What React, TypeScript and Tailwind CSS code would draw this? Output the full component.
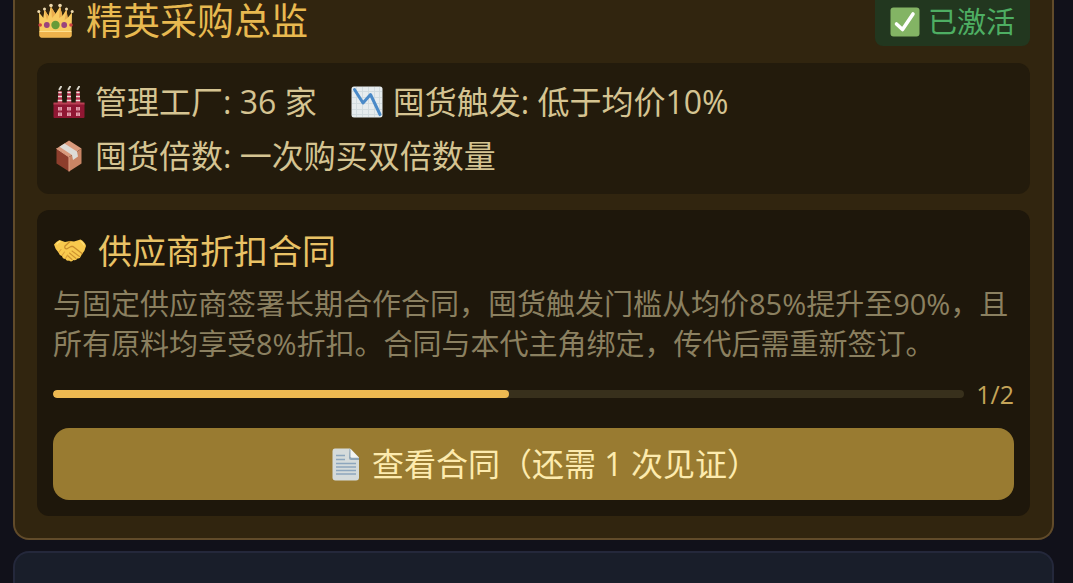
import type { ReactNode } from "react"

interface IconProps {
  className?: string
}

interface Stat {
  icon: ReactNode
  label: string
  value: string
}

function CrownIcon({ className }: IconProps) {
  return (
    <svg viewBox="0 0 37 37" className={className} aria-hidden="true">
      <path d="M7.5 6 L12 14 L13.5 4 L18.5 11 L23.5 4 L25 14 L29.5 6 L31 18 L6 18 Z" fill="#e3a044" />
      <path
        d="M2 9.5 L6.5 15 L7.5 7 L11.5 13 L14 3.5 L18.5 11 L23 3.5 L25.5 13 L29.5 7 L30.5 15 L35 9.5 L34.5 32.5 Q34.5 34.5 32.5 34.5 L4.5 34.5 Q2.5 34.5 2.5 32.5 Z"
        fill="#f8cb62"
      />
      <path d="M7.5 7.5 L11.5 13 L10 17 Z M23 4 L25.5 13 L22 15 Z M14 4 L18.5 11 L15 15 Z M29.5 7.5 L30.5 15 L27.5 17 Z" fill="#e9ab4c" />
      <path d="M2.5 29 H34.5 V32.5 Q34.5 34.5 32.5 34.5 H4.5 Q2.5 34.5 2.5 32.5 Z" fill="#eeb24b" />
      <path d="M2.5 28.5 H34.5" stroke="#ffdf8c" strokeWidth="1.2" />
      <g fill="#ecd9ae">
        <circle cx="1.8" cy="8.5" r="1.5" />
        <circle cx="7.5" cy="6" r="1.5" />
        <circle cx="14" cy="2.5" r="1.8" />
        <circle cx="23" cy="2.5" r="1.8" />
        <circle cx="29.5" cy="6" r="1.5" />
        <circle cx="35.2" cy="8.5" r="1.5" />
      </g>
      <circle cx="18.5" cy="22" r="4.2" fill="#679b38" />
      <circle cx="9.8" cy="22" r="2.9" fill="#9a447d" />
      <circle cx="27.2" cy="22" r="2.9" fill="#9a447d" />
      <circle cx="3.2" cy="22" r="1.8" fill="#cf4242" />
      <circle cx="34" cy="22" r="1.8" fill="#cf4242" />
    </svg>
  )
}

function CheckIcon({ className }: IconProps) {
  return (
    <svg viewBox="0 0 30 30" className={className} aria-hidden="true">
      <rect x="0.5" y="0.5" width="29" height="29" rx="3" fill="#83b464" />
      <path d="M6.5 17 L12.5 22.5 L23 7" fill="none" stroke="#fff" strokeWidth="3.6" strokeLinecap="round" strokeLinejoin="round" />
    </svg>
  )
}

function FactoryIcon({ className }: IconProps) {
  return (
    <svg viewBox="0 0 32 32" className={className} aria-hidden="true">
      {[7, 16, 25].map((x) => (
        <g key={x}>
          <path d={`M${x - 2.3} 17 L${x - 1.6} 5 L${x + 1.6} 5 L${x + 2.3} 17 Z`} fill="#b5304c" />
          <path d={`M${x - 1.7} 6.5 H${x + 1.7} M${x - 2} 10.5 H${x + 2} M${x - 2.2} 14.5 H${x + 2.2}`} stroke="#efe2dc" strokeWidth="1.7" />
          <path d={`M${x - 0.5} 3.2 L${x + 1} 0.8`} stroke="#d9d6cb" strokeWidth="2" strokeLinecap="round" />
        </g>
      ))}
      <rect x="0.5" y="17" width="31" height="15" rx="1" fill="#8f1733" />
      <path d="M0.5 16.5 H31.5 V18.5 H0.5 Z" fill="#b74153" />
      {[7, 16, 25].map((x) => (
        <g key={x} fill="#e39dac">
          <rect x={x - 2} y="21" width="4" height="3.5" />
          <rect x={x - 2} y="26.5" width="4" height="3.5" />
        </g>
      ))}
      <path d="M7 21 V30 M16 21 V30 M25 21 V30" stroke="#b75068" strokeWidth="0.6" />
    </svg>
  )
}

function ChartDownIcon({ className }: IconProps) {
  return (
    <svg viewBox="0 0 32 32" className={className} aria-hidden="true">
      <rect x="0.5" y="0.5" width="31" height="31" rx="2.5" fill="#e6ecee" />
      <path
        d="M5.5 1 V31 M11.5 1 V31 M17.5 1 V31 M23.5 1 V31 M28.5 1 V31 M1 5.5 H31 M1 11.5 H31 M1 17.5 H31 M1 23.5 H31 M1 28.5 H31"
        stroke="#cfdade"
        strokeWidth="0.9"
      />
      <path d="M3.5 3.5 L12 17 L19.5 8.5 L29 28.5" fill="none" stroke="#4a8ac8" strokeWidth="3" strokeLinecap="round" strokeLinejoin="round" />
    </svg>
  )
}

function PackageIcon({ className }: IconProps) {
  return (
    <svg viewBox="0 0 32 32" className={className} aria-hidden="true">
      <path d="M16 0.5 L28.5 8.5 L16 17 L3.5 8.5 Z" fill="#d99a7c" />
      <path d="M3.5 8.5 L16 17 L16 31.5 L3.5 23.5 Z" fill="#8d3e2c" />
      <path d="M28.5 8.5 L16 17 L16 31.5 L28.5 23.5 Z" fill="#c98565" />
      <path d="M11.5 3.5 L6.5 6.8 L19 15 L20 20 L25 16.5 L24 11.5 Z" fill="#dddcd7" />
      <path d="M3.5 8.5 L16 17 V31.5" fill="none" stroke="#e0a286" strokeWidth="1" />
    </svg>
  )
}

function HandshakeIcon({ className }: IconProps) {
  return (
    <svg viewBox="0 0 34 34" className={className} aria-hidden="true">
      <path
        d="M1 10.5 Q3 7.5 6.5 6 L12 8 L17 7 L21 7.5 L27.5 5.5 Q32 8 33 12 Q32 17 29 20 L28 22 Q27 25 24.5 24.5 Q23 27 20.5 26 Q18.5 28.5 16 26.5 Q13.5 27.5 12.5 25 Q9.5 25 9 22 Q6 21 5.5 18.5 Q2 15 1 10.5 Z"
        fill="#f8c94e"
      />
      <path d="M17 7.5 L12 12 Q11 15 14 14.8 L18 12.5 L20 12.5 L29 19.5" fill="none" stroke="#c98c2c" strokeWidth="1.3" strokeLinecap="round" strokeLinejoin="round" />
      <path d="M19 17 L26.5 22.5 M16.5 19 L23 24.5 M14.5 21.5 L19 25.5" stroke="#cf9330" strokeWidth="1.1" strokeLinecap="round" />
      <path d="M6 18 L8 15.5 M9 21.5 L11.5 18 M12.5 24.5 L14.5 21" stroke="#dba03a" strokeWidth="1.1" strokeLinecap="round" />
      <path d="M4 10 Q5 8 7 7.5 M28 7.5 Q30 9 31 11" fill="none" stroke="#ffe07a" strokeWidth="1.3" strokeLinecap="round" />
    </svg>
  )
}

function DocumentIcon({ className }: IconProps) {
  return (
    <svg viewBox="0 0 28 33" className={className} aria-hidden="true">
      <path d="M3 0.5 H18 L27 9.5 V29.5 Q27 32.5 24 32.5 H3.5 Q0.5 32.5 0.5 29.5 V3.5 Q0.5 0.5 3 0.5 Z" fill="#d5dbdb" />
      <path d="M17.5 0.5 L27 10 V12 H19 Q17 12 17 10 Z" fill="#8ea5b7" />
      <path d="M18.5 0.8 L27 9.8 H20 Q18.5 9.8 18.5 8.3 Z" fill="#f2f4f2" />
      <path d="M4 7.5 H13 M4 11.5 H13 M4 15.5 H24 M4 19 H24 M4 22.5 H24 M4 26 H24" stroke="#8da6bd" strokeWidth="1.3" />
    </svg>
  )
}

const stats: Stat[] = [
  { icon: <FactoryIcon className="size-8" />, label: "管理工厂", value: "36 家" },
  { icon: <ChartDownIcon className="size-8" />, label: "囤货触发", value: "低于均价10%" },
  { icon: <PackageIcon className="size-8" />, label: "囤货倍数", value: "一次购买双倍数量" },
]

const contract = {
  title: "供应商折扣合同",
  description:
    "与固定供应商签署长期合作合同，囤货触发门槛从均价85%提升至90%，且所有原料均享受8%折扣。合同与本代主角绑定，传代后需重新签订。",
  witnessed: 1,
  required: 2,
}

function ContractPanel() {
  const { title, description, witnessed, required } = contract

  return (
    <section className="mt-4 rounded-xl bg-[#1e170b] p-4">
      <h3 className="mb-2 flex items-center gap-[11px] text-[34px] leading-[50px] text-[#e9c266]">
        <HandshakeIcon className="size-[34px]" />
        {title}
      </h3>
      <p className="text-[29px] leading-10 text-[#8b8060]">{description}</p>

      <div className="mt-3 flex items-center gap-3">
        <div
          role="progressbar"
          aria-label={title}
          aria-valuenow={witnessed}
          aria-valuemax={required}
          className="h-2 flex-1 overflow-hidden rounded-full bg-[#38301c]"
        >
          <div className="h-full rounded-full bg-[#edb951]" style={{ width: `${(witnessed / required) * 100}%` }} />
        </div>
        <span className="text-[25px] leading-9 text-[#c5a458]">
          {witnessed}/{required}
        </span>
      </div>

      <button
        type="button"
        className="mt-4 flex w-full items-center justify-center gap-3 rounded-2xl bg-[#997b31] py-3 pl-6 text-[32px] leading-[48px] text-[#fdebae]"
      >
        <DocumentIcon className="h-[33px] w-7" />
        查看合同（还需 {required - witnessed} 次见证）
      </button>
    </section>
  )
}

export default function App() {
  return (
    <main className="flex min-h-screen flex-col gap-[11px] bg-[#11111a] pr-[19px] pl-[13px] font-['Open_Sans','Noto_Sans_CJK_SC',sans-serif]">
      <article className="rounded-b-2xl border-2 border-t-0 border-[#614b2a] bg-[#31250f] px-[22px] pb-[22px]">
        <header className="mb-[17px] flex items-start justify-between">
          <h2 className="flex items-center gap-3 text-[37px] leading-[42px] text-[#e8b950]">
            <CrownIcon className="size-[37px]" />
            精英采购总监
          </h2>
          <span className="flex items-center gap-2 rounded-b-lg bg-[#22371f] px-[15px] pb-0.5 text-[29px] leading-[44px] text-[#4eae63]">
            <CheckIcon className="size-[30px]" />
            已激活
          </span>
        </header>

        <ul className="flex flex-wrap gap-x-[34px] gap-y-[9px] rounded-xl bg-[#231b0c] p-4 text-[32px] leading-[45px] text-[#d5c492]">
          {stats.map((stat) => (
            <li key={stat.label} className="flex items-center gap-2.5">
              {stat.icon}
              {stat.label}: {stat.value}
            </li>
          ))}
        </ul>

        <ContractPanel />
      </article>

      {/* Next card in the list */}
      <article className="flex-1 rounded-t-2xl border-2 border-b-0 border-[#24283b] bg-[#191e2a]" />
    </main>
  )
}
